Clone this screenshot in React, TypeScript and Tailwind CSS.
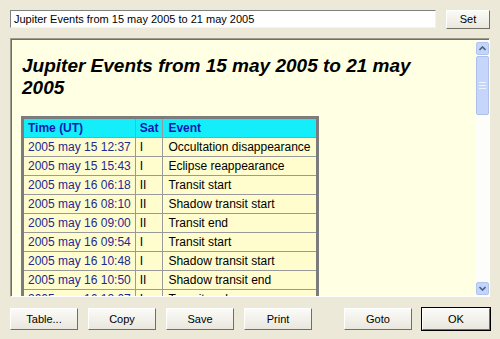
import React from 'react';

const ROWS = [
  { time: '2005 may 15 12:37', sat: 'I', event: 'Occultation disappearance' },
  { time: '2005 may 15 15:43', sat: 'I', event: 'Eclipse reappearance' },
  { time: '2005 may 16 06:18', sat: 'II', event: 'Transit start' },
  { time: '2005 may 16 08:10', sat: 'II', event: 'Shadow transit start' },
  { time: '2005 may 16 09:00', sat: 'II', event: 'Transit end' },
  { time: '2005 may 16 09:54', sat: 'I', event: 'Transit start' },
  { time: '2005 may 16 10:48', sat: 'I', event: 'Shadow transit start' },
  { time: '2005 may 16 10:50', sat: 'II', event: 'Shadow transit end' },
  { time: '2005 may 16 12:07', sat: 'I', event: 'Transit end' },
];

function Btn({ label, def }: { label: string; def?: boolean }) {
  return (
    <button
      className={`w-[68px] h-[22px] text-[11px] text-black bg-gradient-to-b from-[#fbfbf7] to-[#e9e7de] border border-t-white border-l-white border-b-[#716f64] border-r-[#716f64] ${
        def ? 'outline outline-1 outline-black' : ''
      }`}
    >
      {label}
    </button>
  );
}

export default function App() {
  return (
    <div
      className="w-[500px] h-[339px] bg-[#ece9d8] px-[10px] pt-[10px] flex flex-col overflow-hidden"
      style={{ fontFamily: '"Liberation Sans", Arial, sans-serif' }}
    >
      {/* title bar */}
      <div className="flex items-center gap-[10px] h-[18px]">
        <div className="flex-1 h-[18px] bg-white border border-t-[#808080] border-l-[#808080] border-b-[#f4f3ee] border-r-[#f4f3ee] px-[3px] text-[11px] leading-[16px] text-black whitespace-nowrap overflow-hidden">
          Jupiter Events from 15 may 2005 to 21 may 2005
        </div>
        <button className="w-[44px] h-[19px] text-[11px] bg-gradient-to-b from-[#fbfbf7] to-[#e9e7de] border border-t-white border-l-white border-b-[#716f64] border-r-[#716f64]">
          Set
        </button>
      </div>

      {/* content panel */}
      <div className="mt-[10px] h-[259px] flex border border-t-[#9d9b8f] border-l-[#9d9b8f] border-b-white border-r-white">
        <div className="flex-1 bg-[#ffffe3] overflow-hidden pl-[9px] pt-[15px] border-t border-l border-[#716f64]">
          <h1 className="ml-[1px] text-[19px] leading-[22px] font-bold italic text-black w-[420px]">
            Jupiter Events from 15 may 2005 to 21 may 2005
          </h1>
          <table className="mt-[17px] border-collapse border-[3px] border-[#7c7c7c] text-[12px] w-[291px]">
            <thead>
              <tr className="bg-[#14eefb] h-[20px]">
                <th className="w-[108px] text-left font-bold text-[#0b19b3] px-[4px] border border-[#9a9a9a]">Time (UT)</th>
                <th className="w-[29px] text-left font-bold text-[#0b19b3] px-[4px] border border-[#9a9a9a]">Sat</th>
                <th className="text-left font-bold text-[#0b19b3] px-[5px] border border-[#9a9a9a]">Event</th>
              </tr>
            </thead>
            <tbody>
              {ROWS.map((r, i) => (
                <tr key={i} className="bg-[#fffccd] h-[19px]">
                  <td className="text-[#1e2a93] px-[4px] border border-[#9a9a9a] whitespace-nowrap">{r.time}</td>
                  <td className="text-black px-[4px] border border-[#9a9a9a]">{r.sat}</td>
                  <td className="text-black px-[5px] border border-[#9a9a9a] whitespace-nowrap">{r.event}</td>
                </tr>
              ))}
            </tbody>
          </table>
        </div>
        {/* scrollbar */}
        <div className="w-[14px] bg-[#fdfdfa] flex flex-col items-center pt-[2px] pb-[1px] border-t border-[#716f64]">
          <div className="w-[13px] h-[13px] rounded-[2px] bg-[#c4d5fc] border border-[#b0c4f0] flex items-center justify-center">
            <svg width="7" height="5" viewBox="0 0 7 5">
              <path d="M0.5 4 L3.5 1 L6.5 4" stroke="#4d6185" strokeWidth="1.6" fill="none" />
            </svg>
          </div>
          <div className="mt-[1px] w-[13px] h-[59px] rounded-[2px] bg-[#c6d6fb] border border-[#aebfea] flex flex-col items-center justify-center gap-[2px]">
            <div className="w-[7px] h-[1px] bg-[#eef3fe]" />
            <div className="w-[7px] h-[1px] bg-[#eef3fe]" />
            <div className="w-[7px] h-[1px] bg-[#eef3fe]" />
          </div>
          <div className="flex-1" />
          <div className="w-[13px] h-[13px] rounded-[2px] bg-[#c4d5fc] border border-[#b0c4f0] flex items-center justify-center">
            <svg width="7" height="5" viewBox="0 0 7 5">
              <path d="M0.5 1 L3.5 4 L6.5 1" stroke="#4d6185" strokeWidth="1.6" fill="none" />
            </svg>
          </div>
        </div>
      </div>

      {/* buttons */}
      <div className="mt-[11px] flex gap-[10px]">
        <Btn label="Table..." />
        <Btn label="Copy" />
        <Btn label="Save" />
        <Btn label="Print" />
        <div className="ml-auto flex gap-[10px]">
          <Btn label="Goto" />
          <Btn label="OK" def />
        </div>
      </div>
    </div>
  );
}
